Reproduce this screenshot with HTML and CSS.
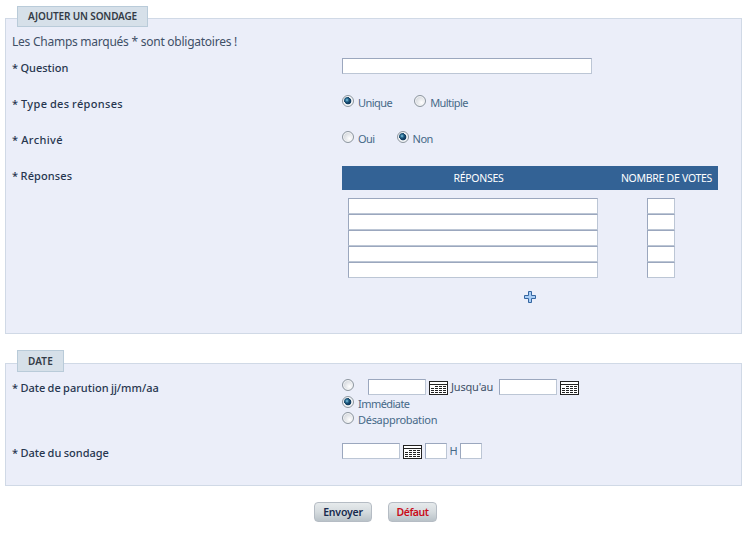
FILE: index.html
```html
<!DOCTYPE html>
<html lang="fr">
<head>
<meta charset="utf-8">
<title>Ajouter un sondage</title>
<link rel="stylesheet" href="styles.css">
</head>
<body>
<svg class="sprites" width="0" height="0" aria-hidden="true">
  <symbol id="calendar" viewBox="0 0 19 14">
    <path fill="#222" d="M0 0h19v14H0z"/>
    <path fill="#fff" d="M1 1h17v2H1zM1 4h17v9H1z"/>
    <path fill="#222" d="M6 5h3v1H6zM10 5h3v1h-3zM14 5h3v1h-3zM2 7h3v1H2zM6 7h3v1H6zM10 7h3v1h-3zM14 7h3v1h-3zM2 9h3v1H2zM6 9h3v1H6zM10 9h3v1h-3zM14 9h3v1h-3zM2 11h3v1H2zM6 11h3v1H6zM10 11h3v1h-3zM14 11h3v1h-3z"/>
  </symbol>
</svg>
<form>
  <section class="panel poll">
    <h2 class="legend">AJOUTER UN SONDAGE</h2>
    <p class="intro">Les Champs marqués * sont obligatoires !</p>
    <div class="row">
      <span class="label label-question">* Question</span>
      <input class="field wide" type="text">
    </div>
    <div class="row">
      <span class="label label-type">* Type des réponses</span>
      <div class="choices">
        <label class="choice"><input type="radio" name="type" checked><span>Unique</span></label>
        <label class="choice"><input type="radio" name="type"><span>Multiple</span></label>
      </div>
    </div>
    <div class="row">
      <span class="label label-archive">* Archivé</span>
      <div class="choices">
        <label class="choice"><input type="radio" name="archive"><span>Oui</span></label>
        <label class="choice"><input type="radio" name="archive" checked><span>Non</span></label>
      </div>
    </div>
    <div class="row">
      <span class="label label-answers">* Réponses</span>
      <div class="answers">
        <div class="answers-head"><span>RÉPONSES</span><span>NOMBRE DE VOTES</span></div>
        <div class="answers-body">
          <input class="field wide" type="text"><input class="field votes" type="text">
          <input class="field wide" type="text"><input class="field votes" type="text">
          <input class="field wide" type="text"><input class="field votes" type="text">
          <input class="field wide" type="text"><input class="field votes" type="text">
          <input class="field wide" type="text"><input class="field votes" type="text">
        </div>
        <svg class="plus" viewBox="0 0 12 12"><path d="M4.5.5h3v4h4v3h-4v4h-3v-4h-4v-3h4z" fill="#a9cdf5" stroke="#3465a0"/></svg>
      </div>
    </div>
  </section>

  <section class="panel date">
    <h2 class="legend">DATE</h2>
    <div class="row date-row">
      <span class="label">* Date de parution jj/mm/aa</span>
      <div class="options">
        <div class="range">
          <input type="radio" name="parution">
          <input class="field day" type="text">
          <svg class="cal"><use href="#calendar"/></svg>
          <span class="until">Jusqu'au</span>
          <input class="field day" type="text">
          <svg class="cal"><use href="#calendar"/></svg>
        </div>
        <label class="choice"><input type="radio" name="parution" checked><span>Immédiate</span></label>
        <label class="choice"><input type="radio" name="parution"><span class="t-reject">Désapprobation</span></label>
      </div>
    </div>
    <div class="row poll-date">
      <span class="label">* Date du sondage</span>
      <div class="moment">
        <input class="field day" type="text">
        <svg class="cal"><use href="#calendar"/></svg>
        <input class="field time" type="text">
        <span class="hour">H</span>
        <input class="field time" type="text">
      </div>
    </div>
  </section>

  <div class="actions">
    <button class="send" type="button">Envoyer</button>
    <button class="reset" type="button">Défaut</button>
  </div>
</form>
</body>
</html>
```
FILE: styles.css
```css
* { box-sizing: border-box; }
body {
  margin: 0;
  padding: 18px 10px 0 5px;
  background: #fff;
  color: #3f5067;
  font: 11px/16px "Noto Sans", sans-serif;
}
.sprites { position: absolute; }
span { white-space: nowrap; }
.panel {
  border: 1px solid #d0d9e6;
  background: #ebeef9;
  padding-left: 6px;
}
.poll { height: 316px; }
.date { height: 123px; margin-top: 29px; }
.legend {
  width: 131px;
  height: 21px;
  margin: -13px 0 0 5px;
  border: 1px solid #b9cbd9;
  background: #d6e0e9;
  color: #333b46;
  font-size: 10px;
  font-weight: 600;
  line-height: 19px;
  padding-left: 10px;
  white-space: nowrap;
  letter-spacing: -0.15px;
}
.date .legend { width: 47px; height: 22px; line-height: 20px; margin-top: -14px; letter-spacing: 0.1px; }
.intro { margin: 7px 0 0; font-size: 12px; line-height: 16px; height: 16px; white-space: nowrap; letter-spacing: -0.25px; }
.row { display: grid; grid-template-columns: 330px 1fr; height: 36px; align-items: start; }
.label { padding-top: 10px; color: #27364f; font-weight: 500; line-height: 16px; word-spacing: -0.5px; }
.label-type { letter-spacing: 0.33px; }
.label-archive { letter-spacing: 0.4px; }
.label-answers { letter-spacing: 0.1px; }
.field {
  display: block;
  height: 16px;
  margin: 0;
  padding: 0 2px;
  border: 1px solid;
  border-color: #9ba7be #bcc6d5 #bcc6d5 #9ba7be;
  border-radius: 0;
  background: #fff;
  outline: 0;
}
.wide { width: 250px; }
.row > .field { margin-top: 8px; }
input[type="radio"] {
  appearance: none;
  flex: none;
  width: 12px;
  height: 12px;
  margin: 0;
  border: 1px solid #8d969f;
  border-radius: 50%;
  background: radial-gradient(circle at 65% 65%, #fff 0, #d8dbe0 65%, #f4f5f7 100%);
  box-shadow: inset 0 0 0 1px #f4f5f7;
}
input[type="radio"]:checked {
  background: radial-gradient(circle at 4px 4px, #8fd0ea 0, #2e7196 1.5px, #123f63 3px, transparent 3.5px), radial-gradient(circle at 5px 5px, #123f63 3px, #eef1f4 3.7px);
}
.choices { display: flex; gap: 22px; padding-top: 9px; }
.choice { display: flex; gap: 4px; color: #466988; letter-spacing: -0.55px; }
.choice span { margin-right: 0; }
.t-reject { letter-spacing: -0.3px; }
.answers { width: 376px; padding-top: 8px; }
.answers-head {
  display: grid;
  grid-template-columns: 273px 103px;
  padding-right: 3px;
  height: 24px;
  background: #336295;
  color: #fff;
  font-size: 10.5px;
  letter-spacing: -0.28px;
  line-height: 24px;
  text-align: center;
}
.answers-body { display: grid; grid-template-columns: 299px 28px; padding: 8px 0 0 6px; }
.votes { width: 28px; }
.plus { display: block; width: 12px; height: 12px; margin: 13px 0 0 182px; }
.date-row { height: 71px; padding-top: 7px; }
.date-row .label { padding-top: 1px; }
.options { display: flex; flex-direction: column; }
.range { display: flex; height: 17px; }
.range input[type="radio"] { margin-right: 14px; }
.cal { flex: none; width: 19px; height: 14px; margin: 2px 3px 0; }
.day { width: 58px; }
.until { width: 45px; margin-right: 3px; letter-spacing: -0.2px; }
.options .choice { height: 16px; }
.poll-date .label { padding-top: 2px; }
.moment { display: flex; }
.time { width: 22px; }
.hour { width: 13px; text-align: center; color: #466988; }
.actions { display: flex; gap: 16px; padding: 16px 0 0 309px; }
button {
  height: 20px;
  padding: 0;
  border: 1px solid #b5bcc4;
  border-radius: 4px;
  background: linear-gradient(#e6eaec, #d5dbde 50%, #b9c2c8);
  font: 600 10.5px/18px "Noto Sans", sans-serif;
  letter-spacing: -0.2px;
}
.send { width: 58px; color: #172a4d; }
.reset { width: 49px; color: #c90c19; letter-spacing: -0.5px; }
```
